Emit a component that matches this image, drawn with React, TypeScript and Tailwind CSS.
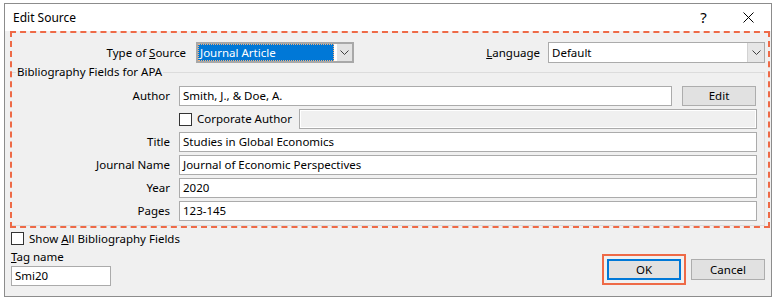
import React from 'react';

function Chevron() {
  return (
    <svg width="9" height="5" viewBox="0 0 9 5" className="block">
      <path d="M0.5 0.5 L4.5 4.5 L8.5 0.5" fill="none" stroke="#404040" strokeWidth="1" />
    </svg>
  );
}

function CheckBox() {
  return <div className="w-[13px] h-[13px] shrink-0 border border-[#333333] bg-white" />;
}

function Field({ label, value, width = 'w-[578px]' }: { label: string; value?: string; width?: string }) {
  return (
    <div className="flex items-center h-[20px]">
      <div className="w-[158px] text-right leading-[20px]">{label}</div>
      <div className={`ml-[9px] h-[20px] ${width} border border-[#ababab] bg-white px-[3px] leading-[18px]`}>
        {value}
      </div>
    </div>
  );
}

export default function App() {
  return (
    <div className="w-[775px] h-[300px] bg-white pt-[3px] pl-[4px] font-['Noto_Sans',sans-serif] text-[11.5px] text-black">
      <div className="w-[768px] h-[294px] border border-[#8c8c8c] bg-[#f0f0f0] flex flex-col">
        {/* title bar */}
        <div className="h-[27px] bg-white flex items-center shrink-0">
          <div className="pl-[8px] flex-1 text-[12px]">Edit Source</div>
          <div className="w-[45px] h-full flex items-center justify-center text-[15px]">?</div>
          <div className="w-[45px] h-full flex items-center justify-center">
            <svg width="11" height="11" viewBox="0 0 11 11">
              <path d="M0.5 0.5 L10.5 10.5 M10.5 0.5 L0.5 10.5" stroke="#000" strokeWidth="1" />
            </svg>
          </div>
        </div>

        {/* highlighted area */}
        <div className="ml-[5px] w-[760px] h-[197px] border-2 border-dashed border-[#ee6a47] shrink-0">
          <div className="mt-[9px] h-[21px] flex items-center">
            <div className="w-[174px] text-right">
              Type of <span className="underline">S</span>ource
            </div>
            <div className="ml-[10px] w-[158px] h-[21px] border-2 border-[#a8a8a8] bg-white flex">
              <div className="w-[136px] bg-[#0078d7] text-white border border-dotted border-[#f7b27a] leading-[15px] px-[1px]">
                Journal Article
              </div>
              <div className="flex-1 ml-[3px] bg-[#e3e3e3] flex items-center justify-center">
                <Chevron />
              </div>
            </div>
            <div className="flex-1" />
            <div>
              <span className="underline">L</span>anguage
            </div>
            <div className="ml-[8px] mr-[3px] w-[217px] h-[21px] border border-[#ababab] bg-white flex">
              <div className="flex-1 px-[3px] leading-[19px]">Default</div>
              <div className="w-[17px] bg-[#e6e6e6] border-l border-[#d2d2d2] flex items-center justify-center">
                <Chevron />
              </div>
            </div>
          </div>

          <div className="relative mt-[9px] w-[753px] h-[154px] border-t border-r border-b border-[#dcdcdc] pt-[13px] flex flex-col gap-[3px]">
            <div className="absolute -top-[9px] left-[4px] bg-[#f0f0f0] px-[1px] leading-[16px]">
              Bibliography Fields for APA
            </div>
            <div className="flex items-center h-[20px]">
              <div className="w-[158px] text-right leading-[20px]">Author</div>
              <div className="ml-[9px] h-[20px] w-[493px] border border-[#ababab] bg-white px-[3px] leading-[18px]">
                Smith, J., &amp; Doe, A.
              </div>
              <div className="ml-[10px] h-[20px] w-[74px] border border-[#adadad] bg-[#e1e1e1] flex items-center justify-center">
                Edit
              </div>
            </div>
            <div className="flex items-center h-[20px]">
              <div className="w-[158px]" />
              <div className="ml-[9px] flex items-center">
                <CheckBox />
                <span className="ml-[5px]">Corporate Author</span>
              </div>
              <div className="ml-auto mr-[7px] h-[20px] w-[458px] border border-[#ababab] bg-[#f0f0f0] shadow-[inset_0_0_0_1px_#ffffff]" />
            </div>
            <Field label="Title" value="Studies in Global Economics" />
            <Field label="Journal Name" value="Journal of Economic Perspectives" />
            <Field label="Year" value="2020" />
            <Field label="Pages" value="123-145" />
          </div>
        </div>

        {/* bottom */}
        <div className="flex flex-1">
          <div className="pl-[6px] flex flex-col">
            <div className="mt-[4px] flex items-center h-[13px]">
              <CheckBox />
              <span className="ml-[5px]">
                Show <span className="underline">A</span>ll Bibliography Fields
              </span>
            </div>
            <div className="mt-[4px] leading-[16px]">
              <span className="underline">T</span>ag name
            </div>
            <div className="mt-[1px] w-[100px] h-[20px] border border-[#ababab] bg-white px-[3px] leading-[18px]">
              Smi20
            </div>
          </div>
          <div className="flex-1" />
          <div className="self-end mb-[11px] mr-[6px] flex items-center">
            <div className="border-2 border-[#ee6a47] p-[3px]">
              <div className="w-[74px] h-[21px] border-2 border-[#0078d7] bg-[#e1e1e1] flex items-center justify-center">
                OK
              </div>
            </div>
            <div className="ml-[5px] w-[74px] h-[21px] border border-[#adadad] bg-[#e1e1e1] flex items-center justify-center">
              Cancel
            </div>
          </div>
        </div>
      </div>
    </div>
  );
}
